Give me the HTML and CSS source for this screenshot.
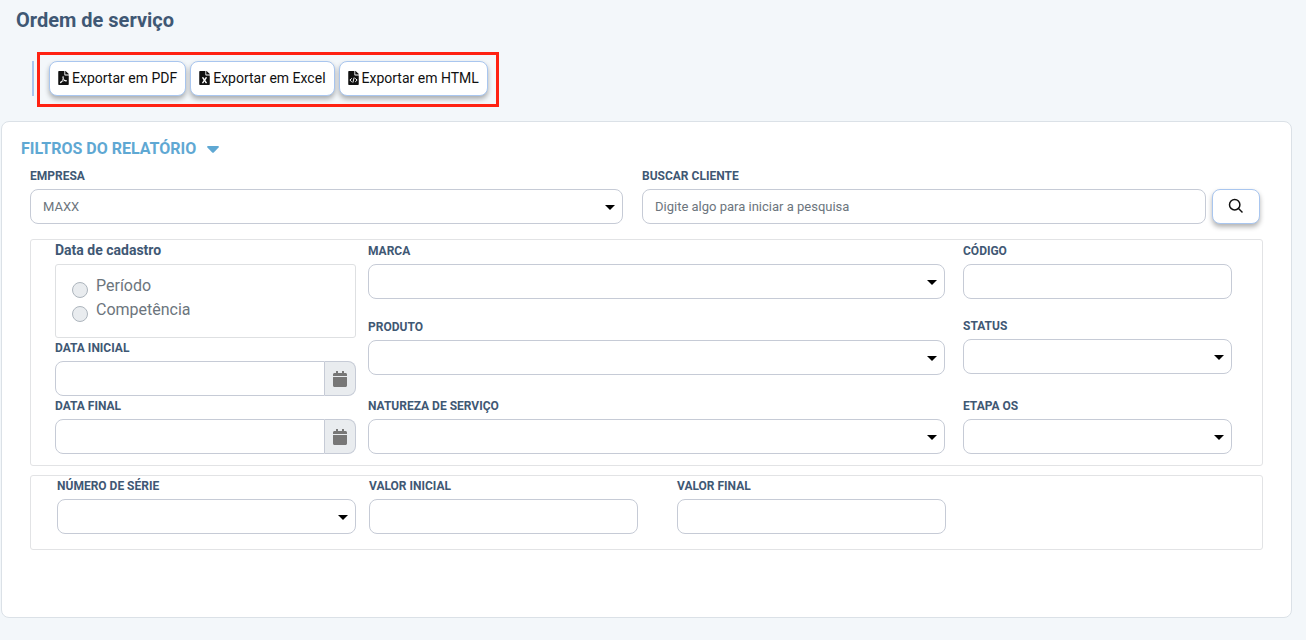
FILE: index.html
```html
<!DOCTYPE html>
<html lang="pt-BR">
<head>
<meta charset="utf-8">
<meta name="viewport" content="width=device-width, initial-scale=1">
<title>Ordem de serviço</title>
<link rel="stylesheet" href="styles.css">
</head>
<body>
<h1 class="page-title">Ordem de serviço</h1>

<div class="toolbar">
  <span class="toolbar-rule"></span>
  <div class="export-group">
    <button type="button" class="btn">
      <svg class="icon-file" viewBox="0 0 384 512" aria-hidden="true"><path d="M181.9 256.1c-5-16-4.9-46.9-2-46.9 8.4 0 7.6 36.9 2 46.9zm-1.7 47.2c-7.7 20.2-17.3 43.3-28.4 62.7 18.3-7 39-17.2 62.9-21.9-12.7-9.6-24.9-23.4-34.5-40.8zM86.1 428.1c0 .8 13.2-5.4 34.9-40.2-6.7 6.3-29.1 24.5-34.9 40.2zM248 160h136v328c0 13.3-10.7 24-24 24H24c-13.3 0-24-10.7-24-24V24C0 10.7 10.7 0 24 0h200v136c0 13.2 10.8 24 24 24zm-8 171.8c-20-12.2-33.3-29-42.7-53.8 4.5-18.5 11.6-46.6 6.2-64.2-4.7-29.4-42.4-26.5-47.8-6.8-5 18.3-.4 44.1 8.1 77-11.6 27.6-28.7 64.6-40.8 85.8-.1 0-.1.1-.2.1-27.1 13.9-73.6 44.5-54.5 68 5.6 6.9 16 10 21.5 10 17.9 0 35.7-18 61.1-61.8 25.8-8.5 54.1-19.1 79-23.2 21.7 11.8 47.1 19.5 64 19.5 29.2 0 31.2-32 19.7-43.4-13.9-13.6-54.3-9.7-73.6-7.2zM377 105L279 7c-4.5-4.5-10.6-7-17-7h-6v128h128v-6.1c0-6.3-2.5-12.4-7-16.9zm-74.1 255.3c4.1-2.7-2.5-11.9-42.8-9 37.1 15.8 42.8 9 42.8 9z"/></svg>
      <span>Exportar em PDF</span>
    </button>
    <button type="button" class="btn">
      <svg class="icon-file" viewBox="0 0 384 512" aria-hidden="true"><path d="M224 136V0H24C10.7 0 0 10.7 0 24v464c0 13.3 10.7 24 24 24h336c13.3 0 24-10.7 24-24V160H248c-13.2 0-24-10.8-24-24zm60.1 106.5L224 336l60.1 93.5c5.1 8-.6 18.5-10.1 18.5h-34.9c-4.4 0-8.5-2.4-10.6-6.3C208.9 405.5 192 373 192 373c-6.4 14.8-10 20-36.6 68.8-2.1 3.9-6.1 6.3-10.5 6.3H110c-9.5 0-15.2-10.5-10.1-18.5l60.3-93.5-60.3-93.5c-5.2-8 .6-18.5 10.1-18.5h34.8c4.4 0 8.5 2.4 10.6 6.3 26.1 48.8 20 33.6 36.6 68.5 0 0 6.1-11.7 36.6-68.5 2.1-3.9 6.2-6.3 10.6-6.3H274c9.5-.1 15.2 10.4 10.1 18.4zM384 121.9v6.1H256V0h6.1c6.4 0 12.5 2.5 17 7l97.9 98c4.5 4.5 7 10.6 7 16.9z"/></svg>
      <span>Exportar em Excel</span>
    </button>
    <button type="button" class="btn">
      <svg class="icon-file" viewBox="0 0 384 512" aria-hidden="true"><path d="M224 136V0H24C10.7 0 0 10.7 0 24v464c0 13.3 10.7 24 24 24h336c13.3 0 24-10.7 24-24V160H248c-13.2 0-24-10.8-24-24zM384 121.900v6.100H256V0h6.100c6.400 0 12.500 2.500 17 7l97.900 98c4.500 4.500 7 10.600 7 16.900z"/><path d="M128 268l-68 64 68 64M256 268l68 64-68 64M216 238l-48 188" fill="none" stroke="#fff" stroke-width="36"/></svg>
      <span>Exportar em HTML</span>
    </button>
  </div>
</div>

<main class="card">
  <h2 class="card-title">
    <button type="button" class="toggle" aria-expanded="true">FILTROS DO RELATÓRIO
      <svg class="toggle-arrow" viewBox="0 0 12 7" aria-hidden="true"><path d="M1 0h10q1.400 .4 .6 1.400L6.800 6.500q-.8.700-1.600 0L.4 1.400Q-.4.400 1 0z"/></svg>
    </button>
  </h2>

  <form class="filters">
    <div class="row-main">
      <div class="field">
        <label for="empresa">EMPRESA</label>
        <select id="empresa" class="control"><option>MAXX</option></select>
      </div>
      <div class="field">
        <label for="cliente">BUSCAR CLIENTE</label>
        <div class="search">
          <input id="cliente" class="control" type="text" placeholder="Digite algo para iniciar a pesquisa">
          <button type="button" class="btn btn-search" aria-label="Buscar">
            <svg class="icon-search" viewBox="0 0 16 16" aria-hidden="true"><circle cx="6.700" cy="6.700" r="5.200"/><path d="M10.500 10.500l4 4"/></svg>
          </button>
        </div>
      </div>
    </div>

    <section class="panel panel-details">
      <div class="column">
        <fieldset class="date-kind" disabled>
          <legend>Data de cadastro</legend>
          <div class="radio-box">
            <label class="radio"><input type="radio" name="tipo"><span>Período</span></label>
            <label class="radio"><input type="radio" name="tipo"><span>Competência</span></label>
          </div>
        </fieldset>
        <div class="field">
          <label for="data-inicial">DATA INICIAL</label>
          <div class="date">
            <input id="data-inicial" class="control" type="text">
            <button type="button" class="date-btn" aria-label="Abrir calendário">
              <svg class="icon-calendar" viewBox="0 0 448 512" aria-hidden="true"><path d="M12 192h424c6.600 0 12 5.400 12 12v260c0 26.500-21.500 48-48 48H48c-26.500 0-48-21.500-48-48V204c0-6.600 5.400-12 12-12zm436-44v-36c0-26.500-21.500-48-48-48h-48V12c0-6.600-5.400-12-12-12h-40c-6.600 0-12 5.400-12 12v52H160V12c0-6.600-5.400-12-12-12h-40c-6.600 0-12 5.400-12 12v52H48C21.500 64 0 85.500 0 112v36c0 6.600 5.400 12 12 12h424c6.600 0 12-5.400 12-12z"/></svg>
            </button>
          </div>
        </div>
        <div class="field">
          <label for="data-final">DATA FINAL</label>
          <div class="date">
            <input id="data-final" class="control" type="text">
            <button type="button" class="date-btn" aria-label="Abrir calendário">
              <svg class="icon-calendar" viewBox="0 0 448 512" aria-hidden="true"><path d="M12 192h424c6.600 0 12 5.400 12 12v260c0 26.500-21.500 48-48 48H48c-26.500 0-48-21.500-48-48V204c0-6.600 5.400-12 12-12zm436-44v-36c0-26.500-21.500-48-48-48h-48V12c0-6.600-5.400-12-12-12h-40c-6.600 0-12 5.400-12 12v52H160V12c0-6.600-5.400-12-12-12h-40c-6.600 0-12 5.400-12 12v52H48C21.500 64 0 85.500 0 112v36c0 6.600 5.400 12 12 12h424c6.600 0 12-5.400 12-12z"/></svg>
            </button>
          </div>
        </div>
      </div>

      <div class="stack stack-wide">
        <div class="field">
          <label for="marca">MARCA</label>
          <select id="marca" class="control"><option></option></select>
        </div>
        <div class="field">
          <label for="produto">PRODUTO</label>
          <select id="produto" class="control"><option></option></select>
        </div>
        <div class="field">
          <label for="natureza">NATUREZA DE SERVIÇO</label>
          <select id="natureza" class="control"><option></option></select>
        </div>
      </div>

      <div class="stack stack-side">
        <div class="field">
          <label for="codigo">CÓDIGO</label>
          <input id="codigo" class="control" type="text">
        </div>
        <div class="field">
          <label for="status">STATUS</label>
          <select id="status" class="control"><option></option></select>
        </div>
        <div class="field">
          <label for="etapa">ETAPA OS</label>
          <select id="etapa" class="control"><option></option></select>
        </div>
      </div>
    </section>

    <section class="panel panel-values">
      <div class="field">
        <label for="serie">NÚMERO DE SÉRIE</label>
        <select id="serie" class="control"><option></option></select>
      </div>
      <div class="field field-spaced">
        <label for="valor-inicial">VALOR INICIAL</label>
        <input id="valor-inicial" class="control" type="text">
      </div>
      <div class="field">
        <label for="valor-final">VALOR FINAL</label>
        <input id="valor-final" class="control" type="text">
      </div>
    </section>
  </form>
</main>
</body>
</html>
```
FILE: styles.css
```css
* {
  box-sizing: border-box;
}

body {
  margin: 0;
  background: #f3f7fa;
  color: #3f5874;
  font-family: Roboto, "Liberation Sans", sans-serif;
  font-size: 14px;
}

button,
input,
select {
  font-family: inherit;
}

.page-title {
  margin: 0;
  padding: 8px 16px 0;
  font-size: 20px;
  line-height: 24px;
  font-weight: 700;
}

/* Export toolbar */
.toolbar {
  display: flex;
  align-items: flex-start;
  gap: 3px;
  padding: 20px 32px 14px;
}

.toolbar-rule {
  width: 2px;
  height: 35px;
  margin-top: 9px;
  background: #a9c6ef;
}

.export-group {
  display: flex;
  flex-wrap: wrap;
  gap: 4px;
  padding: 6px 8px 8px 9px;
  border: 3px solid #ff2212;
}

.btn {
  display: flex;
  align-items: center;
  justify-content: center;
  gap: 3px;
  height: 35px;
  padding: 0 8px 2px;
  border: 1px solid #a9c6ef;
  border-radius: 8px;
  background: #fff;
  color: #111;
  font-size: 14px;
  box-shadow: 0 3px 5px rgba(0, 0, 0, 0.3);
}

.icon-file {
  width: 11px;
  height: 14px;
  fill: #111;
}

/* Filter card */
.card {
  margin: 0 14px 22px 1px;
  padding: 15px 28px 67px;
  border: 1px solid #dbe1e7;
  border-radius: 8px;
  background: #fff;
}

.card-title {
  margin: 0 0 5px -9px;
  font-size: 16px;
  line-height: 24px;
}

.toggle {
  display: flex;
  align-items: center;
  gap: 11px;
  padding: 0;
  border: 0;
  background: none;
  color: #5fa8d3;
  font-size: 16px;
  line-height: 24px;
  font-weight: 700;
}

.toggle-arrow {
  width: 12px;
  height: 7px;
  fill: #5fa8d3;
}

.row-main {
  display: grid;
  grid-template-columns: 593fr 618fr;
  gap: 19px;
  padding-right: 3px;
  margin-bottom: 15px;
}

.field {
  display: flex;
  flex-direction: column;
  gap: 3px;
  min-width: 0;
}

.field > label {
  font-size: 12px;
  line-height: 20px;
  font-weight: 700;
}

.control {
  width: 100%;
  min-width: 0;
  height: 35px;
  padding: 0 12px;
  border: 1px solid #c6cbd6;
  border-radius: 8px;
  background-color: #fff;
  color: #6c757d;
  font-size: 13px;
}

.control::placeholder {
  color: #6c757d;
  opacity: 1;
}

select.control {
  appearance: none;
  background-image: url("data:image/svg+xml,%3Csvg xmlns='http://www.w3.org/2000/svg' viewBox='0 0 10 5'%3E%3Cpath d='M0 0h10L5 5z'/%3E%3C/svg%3E");
  background-repeat: no-repeat;
  background-position: right 7px top 15px;
  background-size: 10px 5px;
}

.search {
  display: flex;
  gap: 6px;
}

.btn-search {
  flex: 0 0 48px;
}

.icon-search {
  width: 16px;
  height: 16px;
  fill: none;
  stroke: #111;
  stroke-width: 1.5;
}

.panel {
  display: grid;
  border: 1px solid #e2e3e5;
  border-radius: 3px;
}

.panel-details {
  grid-template-columns: 301fr 577fr 275fr;
  gap: 12px;
  padding: 1px 30px 11px 24px;
  margin-bottom: 9px;
}

.panel-values {
  grid-template-columns: 299fr 295fr 269fr 273fr;
  gap: 13px;
  padding: 0 30px 15px 26px;
}

.field-spaced {
  padding-right: 26px;
}

.column {
  min-width: 0;
}

.stack {
  display: grid;
  grid-template-rows: 75px 80px auto;
}

.stack-wide {
  grid-template-rows: 76px 79px auto;
}

.stack-side {
  padding-left: 6px;
}

.date-kind {
  min-width: 0;
  margin: 0;
  padding: 0;
  border: 0;
}

.date-kind legend {
  padding: 0 0 5px;
  font-size: 14px;
  line-height: 18px;
  font-weight: 700;
}

.radio-box {
  padding: 9px 16px 15px;
  border: 1px solid #dee0e2;
  border-radius: 3px;
}

.radio {
  display: flex;
  gap: 8px;
  color: #6c757d;
  font-size: 16px;
  line-height: 24px;
}

.radio input {
  appearance: none;
  width: 16px;
  height: 16px;
  margin: 8px 0 0;
  border: 1px solid #adb5bd;
  border-radius: 50%;
  background: #e9ecef;
}

.date {
  display: flex;
}

.date .control {
  border-radius: 8px 0 0 8px;
}

.date-btn {
  display: flex;
  flex: 0 0 31px;
  align-items: center;
  justify-content: center;
  padding: 0;
  border: 1px solid #c6cbd6;
  border-left: 0;
  border-radius: 0 8px 8px 0;
  background: #e9ecef;
}

.icon-calendar {
  width: 14px;
  height: 16px;
  fill: #777;
}
```
